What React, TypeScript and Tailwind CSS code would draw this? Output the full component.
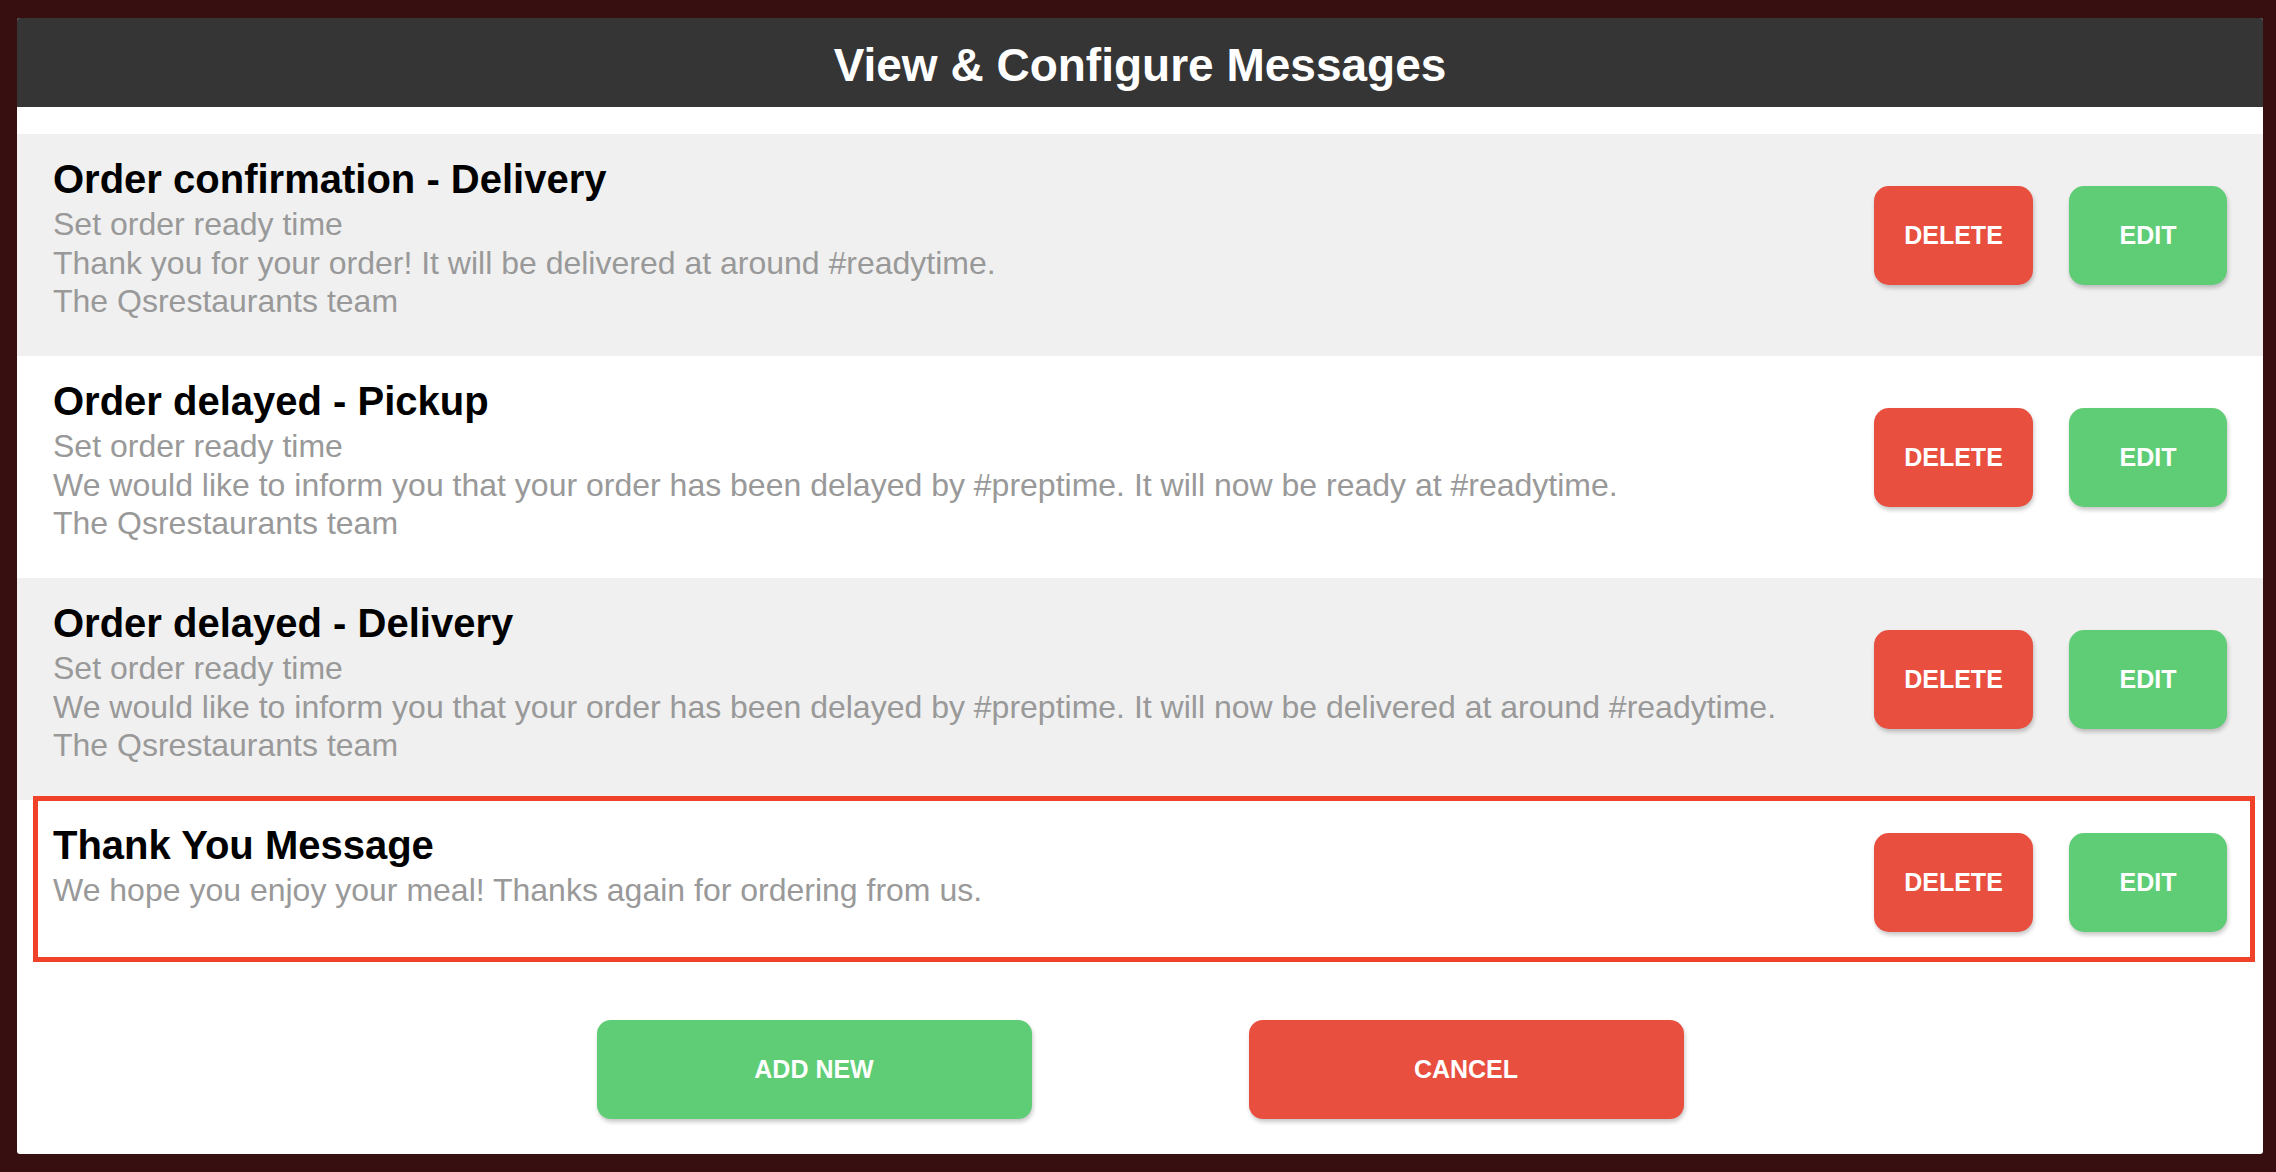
import React from 'react';

interface Message {
  title: string;
  lines: string[];
}

const messages: Message[] = [
  {
    title: 'Order confirmation - Delivery',
    lines: [
      'Set order ready time',
      'Thank you for your order! It will be delivered at around #readytime.',
      'The Qsrestaurants team',
    ],
  },
  {
    title: 'Order delayed - Pickup',
    lines: [
      'Set order ready time',
      'We would like to inform you that your order has been delayed by #preptime. It will now be ready at #readytime.',
      'The Qsrestaurants team',
    ],
  },
  {
    title: 'Order delayed - Delivery',
    lines: [
      'Set order ready time',
      'We would like to inform you that your order has been delayed by #preptime. It will now be delivered at around #readytime.',
      'The Qsrestaurants team',
    ],
  },
  {
    title: 'Thank You Message',
    lines: ['We hope you enjoy your meal! Thanks again for ordering from us.'],
  },
];

const btnBase =
  'flex items-center justify-center text-white font-bold uppercase shadow-[1px_3px_4px_rgba(0,0,0,0.22)]';

const MessageRow: React.FC<{ msg: Message; index: number }> = ({ msg, index }) => {
  const shaded = index % 2 === 0;
  const short = msg.lines.length === 1;
  const highlighted = index === messages.length - 1;

  return (
    <div className={`relative flex justify-between pl-[36px] pr-[36px] ${shaded ? 'bg-[#f0f0f0]' : 'bg-white'}`}>
      <div className="pt-[20px] pb-[35.5px]">
        <h2 className="text-[40px] leading-[51px] font-bold text-black whitespace-nowrap">{msg.title}</h2>
        {msg.lines.map((line, i) => (
          <p key={i} className="text-[32px] leading-[38.5px] text-[#999999] whitespace-nowrap">
            {line}
          </p>
        ))}
      </div>
      <div className={`flex gap-[36px] self-start ${short ? 'mt-[33px] mb-[26px]' : 'mt-[52px]'}`}>
        <button className={`${btnBase} w-[159px] h-[99px] rounded-[15px] bg-[#e84f3f] text-[25px]`}>Delete</button>
        <button className={`${btnBase} w-[158px] h-[99px] rounded-[15px] bg-[#5ecd75] text-[25px]`}>Edit</button>
      </div>
      {highlighted && (
        <div className="absolute -top-[4px] -bottom-[4px] left-[16px] right-[8px] border-[5px] border-[#ef4229] pointer-events-none" />
      )}
    </div>
  );
};

export default function App() {
  return (
    <div className="min-h-screen bg-[#380f10] pl-[17px] pr-[13px] pt-[18px] pb-[18px] font-['Liberation_Sans',Arial,sans-serif]">
      <div className="bg-white rounded-[3px] h-[1136px] flex flex-col">
        <header className="h-[89px] bg-[#353535] rounded-t-[3px] flex items-center justify-center pt-[5px]">
          <h1 className="text-white font-bold text-[46px] leading-none">View &amp; Configure Messages</h1>
        </header>

        <div className="pt-[27px]">
          {messages.map((m, i) => (
            <MessageRow key={m.title} msg={m} index={i} />
          ))}
        </div>

        <div className="flex justify-center gap-[217px] pt-[62px]">
          <button className={`${btnBase} w-[435px] h-[99px] rounded-[14px] bg-[#5ecd75] text-[25px]`}>Add New</button>
          <button className={`${btnBase} w-[435px] h-[99px] rounded-[14px] bg-[#e84f3f] text-[25px]`}>Cancel</button>
        </div>
      </div>
    </div>
  );
}
